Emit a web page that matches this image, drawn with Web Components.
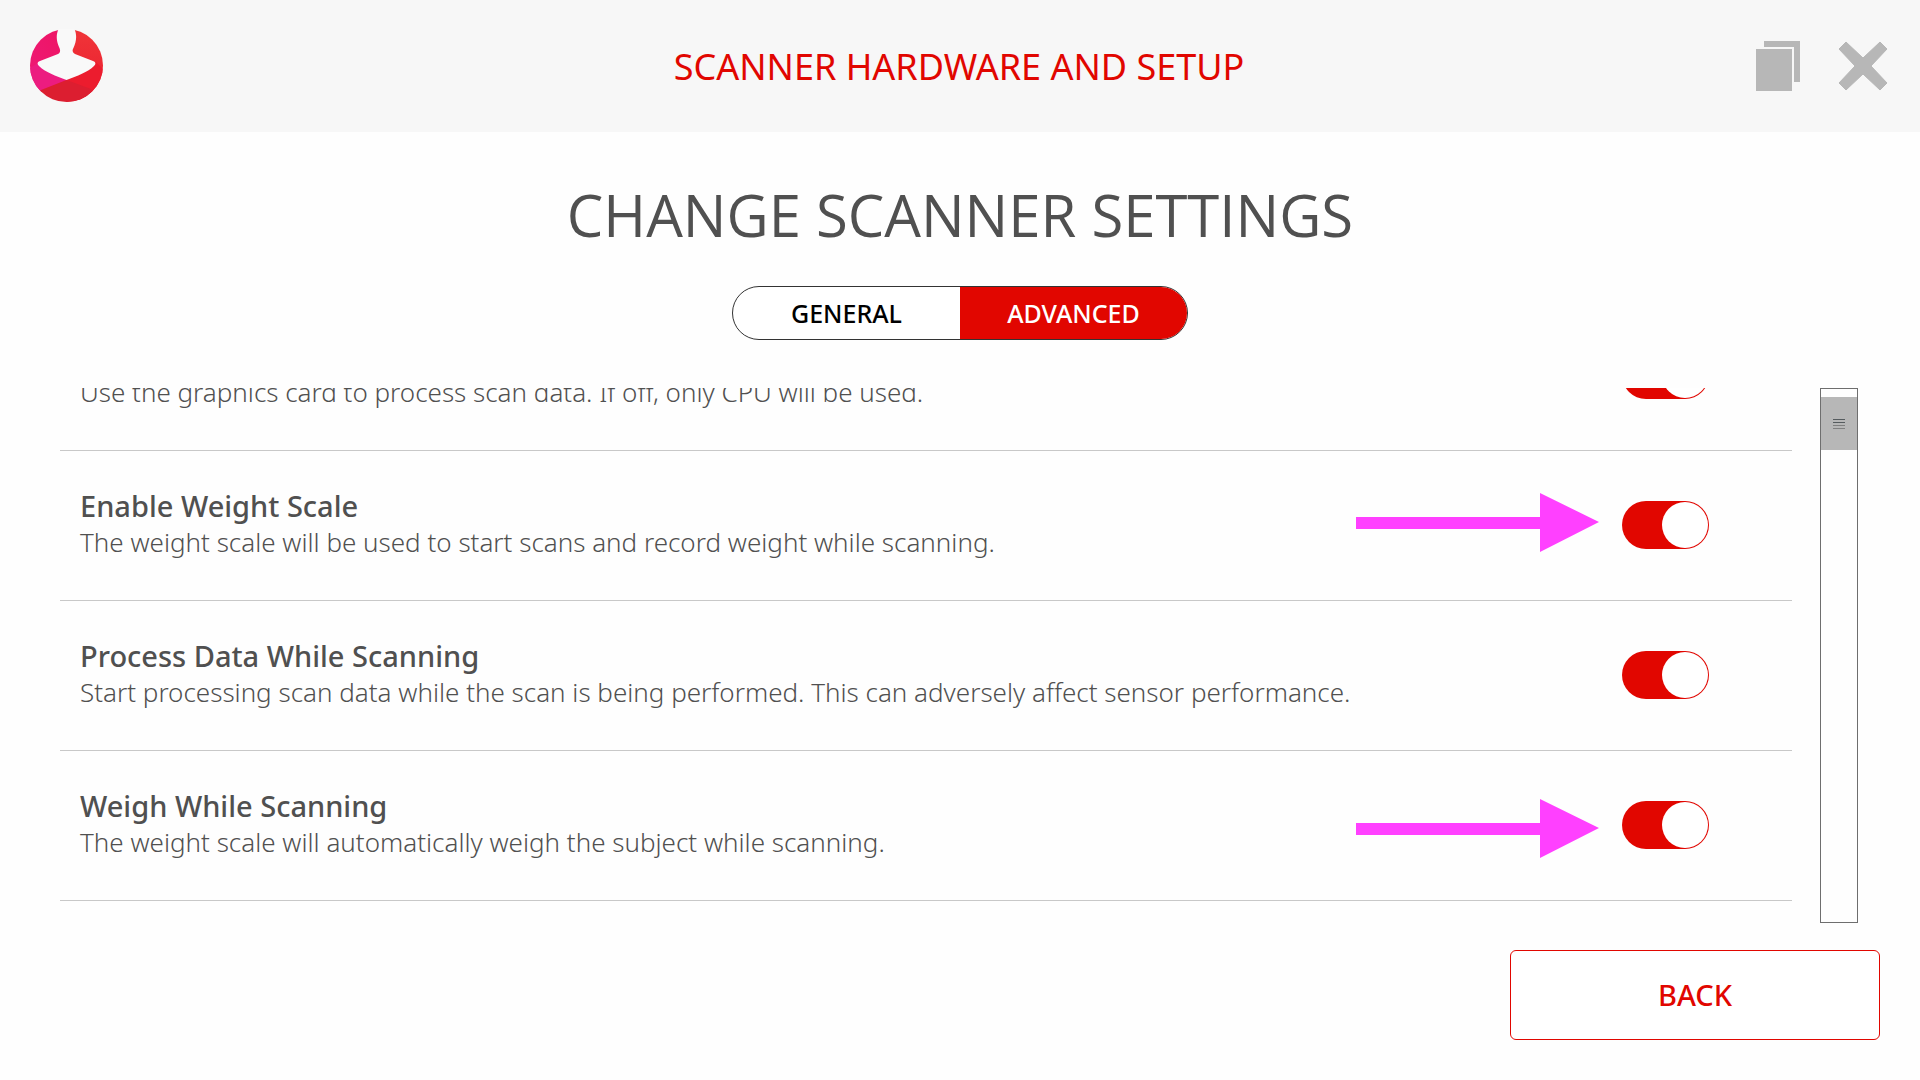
<!DOCTYPE html>
<html lang="en">
<head>
<meta charset="UTF-8">
<meta name="viewport" content="width=device-width, initial-scale=1">
<title>Scanner Hardware and Setup</title>
<style>
    :root {
        --red: #e10600;
        --text: #505050;
        --line: #c8c8c8;
        --icon: #b7b7b7;
    }

    body {
        margin: 0;
        font-family: "Noto Sans", "Open Sans", sans-serif;
        color: var(--text);
        background: #fefefe;
    }
</style>
</head>
<body>
<scanner-app>
    <app-header slot="header">Scanner Hardware and Setup</app-header>
    <span slot="title">Change Scanner Settings</span>
    <segment-tabs slot="tabs" options="General,Advanced" selected="Advanced"></segment-tabs>
    <settings-list slot="content">
        <setting-row>
            <span slot="description">Use the graphics card to process scan data. If off, only CPU will be used.</span>
        </setting-row>
        <setting-row>
            <span slot="name">Enable Weight Scale</span>
            <span slot="description">The weight scale will be used to start scans and record weight while scanning.</span>
        </setting-row>
        <setting-row>
            <span slot="name">Process Data While Scanning</span>
            <span slot="description">Start processing scan data while the scan is being performed. This can adversely affect sensor performance.</span>
        </setting-row>
        <setting-row>
            <span slot="name">Weigh While Scanning</span>
            <span slot="description">The weight scale will automatically weigh the subject while scanning.</span>
        </setting-row>
        <callout-arrow slot="callouts" style="top: 104px"></callout-arrow>
        <callout-arrow slot="callouts" style="top: 410px"></callout-arrow>
    </settings-list>
    <outline-button slot="footer">Back</outline-button>
</scanner-app>

<script>
    // Attaches an open shadow root with the given markup
    class BaseElement extends HTMLElement {
        constructor() {
            super();
            this.attachShadow({ mode: 'open' });
            this.shadowRoot.innerHTML = this.template();
        }

        template() {
            return '';
        }
    }

    class ScannerApp extends BaseElement {
        template() {
            return `
                <style>
                    :host {
                        display: flex;
                        flex-direction: column;
                        height: 100vh;
                    }
                    main {
                        flex: 1;
                        min-height: 0;
                        display: flex;
                        flex-direction: column;
                        align-items: center;
                    }
                    h1 {
                        margin: 41px 0 29px;
                        font-family: "Open Sans", sans-serif;
                        font-size: 58px;
                        line-height: 84px;
                        font-weight: 400;
                        text-transform: uppercase;
                    }
                    .content {
                        flex: 1;
                        min-height: 0;
                        align-self: stretch;
                        display: flex;
                        margin-top: 48px;
                    }
                    footer {
                        display: flex;
                        justify-content: flex-end;
                        padding: 27px 40px 40px;
                    }
                </style>
                <slot name="header"></slot>
                <main>
                    <h1><slot name="title"></slot></h1>
                    <slot name="tabs"></slot>
                    <div class="content"><slot name="content"></slot></div>
                </main>
                <footer><slot name="footer"></slot></footer>
            `;
        }
    }

    class AppHeader extends BaseElement {
        template() {
            return `
                <style>
                    :host {
                        display: grid;
                        grid-template-columns: 1fr auto 1fr;
                        align-items: center;
                        padding: 29px 32px 29px 30px;
                        background: #f7f7f7;
                        color: var(--red);
                    }
                    svg { display: block; }
                    .title {
                        margin: 0;
                        padding-top: 2px;
                        font-size: 36px;
                        line-height: 48px;
                        font-weight: 400;
                        text-transform: uppercase;
                    }
                    .actions {
                        display: flex;
                        justify-content: flex-end;
                        align-items: center;
                        gap: 38px;
                    }
                    button {
                        padding: 0;
                        border: none;
                        background: none;
                        color: var(--icon);
                        cursor: pointer;
                    }
                </style>
                <svg width="74" height="74" viewBox="0 0 74 74" role="img" aria-label="Logo">
                    <defs>
                        <clipPath id="disc"><circle cx="36.5" cy="36.5" r="36.5"/></clipPath>
                        <linearGradient id="pink" x1="0" y1="1" x2="1" y2="0">
                            <stop offset="0" stop-color="#ee1a78"/>
                            <stop offset="1" stop-color="#ee1463"/>
                        </linearGradient>
                        <linearGradient id="red" x1="0" y1="0" x2="0" y2="1">
                            <stop offset="0" stop-color="#f03539"/>
                            <stop offset="1" stop-color="#ea1c2d"/>
                        </linearGradient>
                    </defs>
                    <g clip-path="url(#disc)">
                        <path d="M0 0H37V52L10 62L0 74Z" fill="url(#pink)"/>
                        <path d="M0 39L8 34L37 51L10 62L0 74Z" fill="#ec1c80"/>
                        <path d="M36.500 0H74V74H36.500Z" fill="url(#red)"/>
                        <path d="M36.500 51L66 33L74 41V74H50Z" fill="#ec1c2e"/>
                        <path d="M11 61L36.500 51L61 60L66 74H0Z" fill="#dc1e30"/>
                    </g>
                    <path d="M29 -1C26 5 26 11 29 18C31 22 30 24 28 25L10 32C7 33 7 35 9 37C15 43 26 47 36.500 51C47 47 58 43 64 37C66 35 66 33 63 32L45 25C43 24 42 22 43 20C47 12 47 5 44 -1Z" fill="#f9f9f9"/>
                </svg>
                <h2 class="title"><slot></slot></h2>
                <div class="actions">
                    <button aria-label="Windows">
                        <svg width="44" height="50" viewBox="0 0 44 50" fill="currentColor">
                            <path d="M8 0H44V41H38V6H8Z"/>
                            <path d="M0 8H36V50H0Z"/>
                        </svg>
                    </button>
                    <button aria-label="Close">
                        <svg width="50" height="50" viewBox="0 0 50 50" fill="currentColor">
                            <path d="M8 1L25 17L42 1L49 8L33 25L49 42L42 49L25 33L8 49L1 42L17 25L1 8Z"
                                stroke="currentColor" stroke-width="1" stroke-linejoin="round"/>
                        </svg>
                    </button>
                </div>
            `;
        }
    }

    class SegmentTabs extends BaseElement {
        template() {
            return `
                <style>
                    :host {
                        display: grid;
                        grid-auto-flow: column;
                        grid-auto-columns: 1fr;
                        box-sizing: border-box;
                        width: 456px;
                        border: 1px solid #333;
                        border-radius: 27px;
                        overflow: hidden;
                        background: #fff;
                    }
                    button {
                        height: 52px;
                        padding: 0;
                        border: none;
                        background: none;
                        color: #000;
                        font-family: inherit;
                        font-size: 25px;
                        font-weight: 500;
                        line-height: 36px;
                        text-transform: uppercase;
                        cursor: pointer;
                    }
                    button[aria-selected="true"] {
                        background: var(--red);
                        color: #fff;
                    }
                </style>
            `;
        }

        connectedCallback() {
            this.setAttribute('role', 'tablist');
            this.getAttribute('options').split(',').forEach((name) => {
                const button = document.createElement('button');
                button.textContent = name;
                button.setAttribute('role', 'tab');
                button.setAttribute('aria-selected', name === this.getAttribute('selected'));
                button.addEventListener('click', () => this._select(button));
                this.shadowRoot.appendChild(button);
            });
        }

        _select(selected) {
            this.shadowRoot.querySelectorAll('button').forEach((button) => {
                button.setAttribute('aria-selected', button === selected);
            });
        }
    }

    class SettingsList extends BaseElement {
        template() {
            return `
                <style>
                    :host {
                        flex: 1;
                        display: flex;
                        gap: 28px;
                        padding: 0 62px 0 60px;
                    }
                    .viewport {
                        position: relative;
                        flex: 1;
                        min-width: 0;
                        display: flex;
                        flex-direction: column;
                        justify-content: flex-end;
                        padding-bottom: 22px;
                        overflow: hidden;
                    }
                </style>
                <div class="viewport">
                    <slot></slot>
                    <slot name="callouts"></slot>
                </div>
                <scroll-track></scroll-track>
            `;
        }
    }

    class SettingRow extends BaseElement {
        template() {
            return `
                <style>
                    :host {
                        flex: none;
                        display: block;
                        border-bottom: 1px solid var(--line);
                    }
                    label {
                        display: flex;
                        align-items: center;
                        justify-content: space-between;
                        height: 147px;
                        padding: 0 83px 2px 20px;
                    }
                    .text { padding-bottom: 2px; }
                    .name {
                        display: block;
                        min-height: 36px;
                        font-size: 29px;
                        line-height: 36px;
                        font-weight: 500;
                    }
                    .description {
                        display: block;
                        font-size: 26px;
                        line-height: 36px;
                        font-weight: 300;
                    }
                    input {
                        appearance: none;
                        box-sizing: border-box;
                        flex: none;
                        display: flex;
                        width: 87px;
                        height: 48px;
                        margin: 0;
                        padding: 1px;
                        border-radius: 24px;
                        background: var(--icon);
                        cursor: pointer;
                    }
                    input::before {
                        content: "";
                        width: 46px;
                        height: 46px;
                        border-radius: 50%;
                        background: #fff;
                    }
                    input:checked {
                        justify-content: flex-end;
                        background: var(--red);
                    }
                </style>
                <label>
                    <span class="text">
                        <span class="name"><slot name="name"></slot></span>
                        <span class="description"><slot name="description"></slot></span>
                    </span>
                    <input type="checkbox" role="switch" checked>
                </label>
            `;
        }
    }

    class ScrollTrack extends BaseElement {
        template() {
            return `
                <style>
                    :host {
                        display: block;
                        box-sizing: border-box;
                        width: 38px;
                        padding-top: 8px;
                        border: 1px solid #6e6e6e;
                    }
                    .thumb {
                        display: flex;
                        flex-direction: column;
                        align-items: center;
                        justify-content: center;
                        gap: 2px;
                        height: 53px;
                        background: var(--icon);
                    }
                    .thumb i {
                        width: 12px;
                        height: 1px;
                        background: #555b5e;
                    }
                    .thumb i:nth-child(n+3) { background: #808080; }
                </style>
                <div class="thumb"><i></i><i></i><i></i><i></i></div>
            `;
        }
    }

    class CalloutArrow extends BaseElement {
        template() {
            return `
                <style>
                    :host {
                        position: absolute;
                        right: 193px;
                        pointer-events: none;
                    }
                    svg { display: block; }
                </style>
                <svg width="243" height="60" viewBox="0 0 243 60" aria-hidden="true">
                    <path d="M0 25H184V1L243 30L184 60V37H0Z" fill="#ff40ff"/>
                </svg>
            `;
        }
    }

    class OutlineButton extends BaseElement {
        template() {
            return `
                <style>
                    :host { display: block; }
                    button {
                        display: block;
                        width: 370px;
                        height: 90px;
                        padding: 0 0 2px;
                        border: 1px solid var(--red);
                        border-radius: 6px;
                        background: #fff;
                        color: var(--red);
                        font-family: inherit;
                        font-size: 29px;
                        font-weight: 500;
                        text-transform: uppercase;
                        cursor: pointer;
                    }
                </style>
                <button><slot></slot></button>
            `;
        }
    }

    customElements.define('scanner-app', ScannerApp);
    customElements.define('app-header', AppHeader);
    customElements.define('segment-tabs', SegmentTabs);
    customElements.define('settings-list', SettingsList);
    customElements.define('setting-row', SettingRow);
    customElements.define('scroll-track', ScrollTrack);
    customElements.define('callout-arrow', CalloutArrow);
    customElements.define('outline-button', OutlineButton);
</script>
</body>
</html>
